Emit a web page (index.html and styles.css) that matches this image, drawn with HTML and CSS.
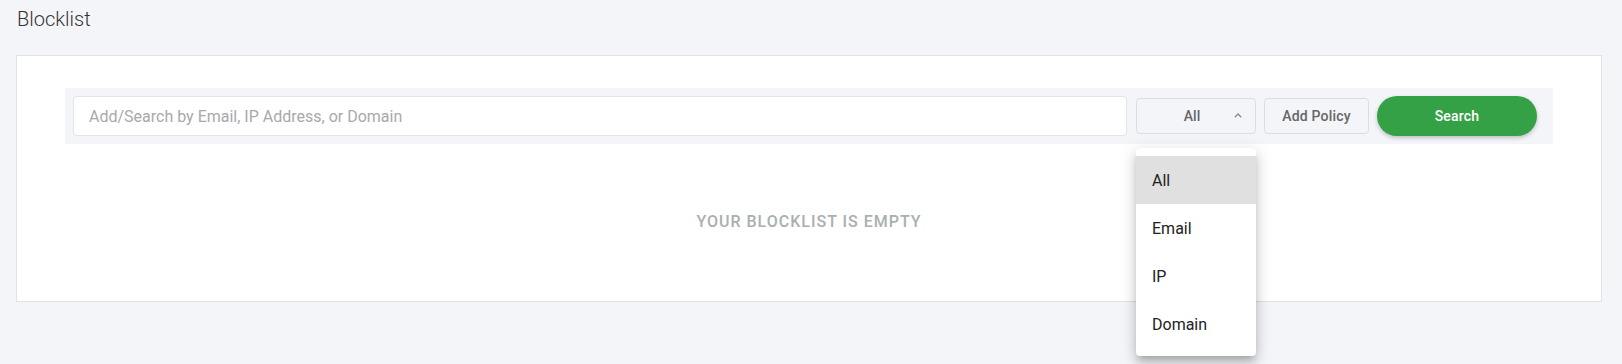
FILE: index.html
```html
<!DOCTYPE html>
<html>
<head>
<meta charset="utf-8">
<link rel="stylesheet" href="styles.css">
</head>
<body>
<div class="page">
  <h1 class="title">Blocklist</h1>
  <div class="card">
    <div class="toolbar">
      <div class="search-input">Add/Search by Email, IP Address, or Domain</div>
      <div class="select-wrap">
        <div class="select">
          <span class="select-label">All</span>
          <svg class="chevron" width="8" height="5" viewBox="0 0 8 5"><polyline points="0.8,4.2 4,1 7.2,4.2" fill="none" stroke="#888" stroke-width="1.3"/></svg>
        </div>
        <ul class="menu">
          <li class="menu-item active">All</li>
          <li class="menu-item">Email</li>
          <li class="menu-item">IP</li>
          <li class="menu-item">Domain</li>
        </ul>
      </div>
      <button class="btn-outline">Add Policy</button>
      <button class="btn-primary">Search</button>
    </div>
    <div class="empty">YOUR BLOCKLIST IS EMPTY</div>
  </div>
</div>
</body>
</html>
```

FILE: styles.css
```css
* { box-sizing: border-box; }
html, body {
  margin: 0;
  padding: 0;
  background: #f4f5f9;
  font-family: Roboto, "Liberation Sans", sans-serif;
}
.page {
  padding: 7px 20px 0 16px;
  display: flex;
  flex-direction: column;
  min-height: 364px;
}
.title {
  margin: 0 0 24px 1px;
  font-size: 20px;
  font-weight: 300;
  color: #333;
  line-height: 24px;
}
.card {
  background: #fff;
  border: 1px solid #e1e2e6;
  padding: 32px 48px 0 48px;
  display: flex;
  flex-direction: column;
  height: 247px;
}
.toolbar {
  background: #f4f5f9;
  padding: 8px 16px 8px 8px;
  display: flex;
  align-items: center;
  gap: 8px;
  height: 56px;
  position: relative;
  z-index: 2;
}
.search-input {
  flex: 1;
  height: 40px;
  background: #fff;
  border: 1px solid #e3e4e8;
  border-radius: 4px;
  padding: 0 15px;
  display: flex;
  align-items: center;
  font-size: 16px;
  color: #a8a9ad;
  margin-right: 1px;
}
.select-wrap {
  position: relative;
  width: 120px;
}
.select {
  height: 36px;
  border: 1px solid #dcdde1;
  border-radius: 4px;
  display: flex;
  align-items: center;
  padding: 0 13px 0 0;
  font-size: 14px;
  font-weight: 500;
  color: #666;
}
.select-label {
  flex: 1;
  text-align: center;
  padding-left: 13px;
}
.chevron { display: block; margin-top: -2px; }
.menu {
  position: absolute;
  top: 50px;
  left: 0;
  width: 120px;
  margin: 0;
  padding: 8px 0;
  list-style: none;
  background: #fff;
  border-radius: 4px;
  box-shadow: 0 5px 6px -3px rgba(0,0,0,0.2), 0 9px 12px 1px rgba(0,0,0,0.12), 0 3px 16px 2px rgba(0,0,0,0.1);
  z-index: 10;
}
.menu-item {
  height: 48px;
  padding: 0 16px;
  display: flex;
  align-items: center;
  font-size: 16px;
  color: #222;
}
.menu-item.active { background: #e0e0e0; }
.btn-outline {
  width: 105px;
  height: 36px;
  background: transparent;
  border: 1px solid #dcdde1;
  border-radius: 4px;
  font-family: inherit;
  font-size: 14px;
  font-weight: 500;
  color: #666;
  letter-spacing: 0.2px;
  padding: 0;
}
.btn-primary {
  width: 160px;
  height: 40px;
  background: #35a146;
  border: none;
  border-radius: 20px;
  color: #fff;
  font-family: inherit;
  font-size: 14px;
  font-weight: 500;
  letter-spacing: 0.2px;
  box-shadow: 0 2px 4px rgba(0,0,0,0.22);
  padding: 0;
}
.empty {
  margin-top: 68px;
  text-align: center;
  font-size: 16px;
  font-weight: 500;
  letter-spacing: 1px;
  color: #a9b0ad;
}
```
